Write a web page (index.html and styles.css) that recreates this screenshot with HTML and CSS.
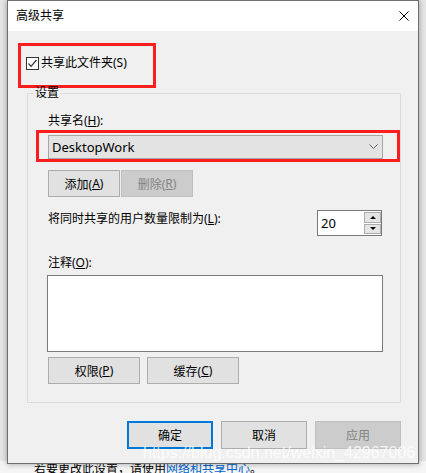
FILE: index.html
```html
<html>
<head>
    <title>高级共享</title>
    <link rel="stylesheet" href="styles.css">
</head>
<body>
<div class="desktop">
    <div class="dialog">
        <div class="title-bar">
            <span class="title-text">高级共享</span>
            <span class="close-btn">
                <svg width="10" height="10" viewBox="0 0 10 10"><path d="M0.5 0.5 L9.5 9.5 M9.5 0.5 L0.5 9.5" stroke="#000" stroke-width="1" fill="none"/></svg>
            </span>
        </div>
        <div class="dialog-body">
            <div class="mark mark-share">
                <div class="check-row">
                    <span class="check-box">
                        <svg width="13" height="13" viewBox="0 0 13 13"><rect x="0.5" y="0.5" width="12" height="12" fill="#fff" stroke="#333"/><polyline points="2.5,6.5 5,9.3 10.5,3" fill="none" stroke="#333" stroke-width="1.2"/></svg>
                    </span>
                    <span>共享此文件夹(S)</span>
                </div>
            </div>
            <fieldset class="group">
                <legend class="group-title">设置</legend>
                <div class="field-label">共享名(<u>H</u>):</div>
                <div class="mark mark-combo">
                    <div class="combo">
                        <span class="combo-text">DesktopWork</span>
                        <svg width="9" height="6" viewBox="0 0 9 6"><polyline points="0.5,0.5 4.5,4.5 8.5,0.5" fill="none" stroke="#606060" stroke-width="1"/></svg>
                    </div>
                </div>
                <div class="btn-row btn-row-tight">
                    <span class="btn btn-small">添加(<u>A</u>)</span>
                    <span class="btn btn-small disabled">删除(<u>R</u>)</span>
                </div>
                <div class="limit-row">
                    <span class="limit-label">将同时共享的用户数量限制为(<u>L</u>):</span>
                    <div class="spin">
                        <span class="spin-value">20</span>
                        <div class="spin-btns">
                            <span class="spin-btn"><span class="tri-up"></span></span>
                            <span class="spin-btn"><span class="tri-down"></span></span>
                        </div>
                    </div>
                </div>
                <div class="field-label field-label-comment">注释(<u>O</u>):</div>
                <div class="comment-box"></div>
                <div class="btn-row btn-row-wide">
                    <span class="btn btn-wide">权限(<u>P</u>)</span>
                    <span class="btn btn-wide">缓存(<u>C</u>)</span>
                </div>
            </fieldset>
            <div class="footer">
                <span class="btn btn-main default">确定</span>
                <span class="btn btn-main">取消</span>
                <span class="btn btn-main disabled">应用</span>
            </div>
        </div>
    </div>
    <div class="behind-text">若要更改此设置，请使用<span class="link">网络和共享中心</span>。</div>
    <div class="watermark">https://blog.csdn.net/weixin_42967006</div>
</div>
</body>
</html>
```

FILE: styles.css
```css
body {
    margin: 0;
    width: 426px;
    height: 473px;
    overflow: hidden;
    background: #f0f0f0;
    font-family: "Noto Sans", "Noto Sans CJK SC", sans-serif;
    font-size: 12px;
    color: #000;
}

.desktop {
    position: relative;
    height: 473px;
    background: #e6e6e6;
}

.dialog {
    position: relative;
    z-index: 1;
    width: 412px;
    height: 464px;
    margin-left: 7px;
    box-sizing: border-box;
    border: 1px solid #6e6e6e;
    background: #f0f0f0;
    box-shadow: 0 0 6px rgba(0,0,0, .35);
    display: flex;
    flex-direction: column;
}

.title-bar {
    height: 30px;
    flex-shrink: 0;
    background: #fff;
    display: flex;
    align-items: center;
    justify-content: space-between;
    padding: 0 9px 0 8px;
}

.title-text {
    line-height: 16px;
}

.close-btn svg {
    display: block;
}

.dialog-body {
    flex: 1;
    padding-top: 12px;
}

.mark {
    box-sizing: border-box;
    border: 3px solid #fa1e1e;
}

.mark-share {
    width: 138px;
    height: 45px;
    margin-left: 10px;
    padding: 9px 0 0 5px;
}

.check-row {
    display: flex;
    align-items: center;
    gap: 2px;
    line-height: 16px;
}

.check-box svg {
    display: block;
}

.group {
    width: 374px;
    box-sizing: border-box;
    min-width: 0;
    margin: -3px 0 0 19px;
    padding: 12px 16px 18px 20px;
    border: 1px solid #dcdcdc;
}

.group-title {
    margin-left: -14px;
    padding: 0 1px;
    line-height: 16px;
}

.field-label {
    line-height: 16px;
}

.field-label-comment {
    margin-top: 19px;
}

.mark-combo {
    width: 364px;
    margin: 1px 0 0 -12px;
    padding: 2px 0 0 9px;
}

.combo {
    width: 335px;
    height: 24px;
    box-sizing: border-box;
    border: 1px solid #a6a6a6;
    background: #e3e3e3;
    display: flex;
    align-items: center;
    justify-content: space-between;
    padding: 0 4px 0 3px;
    font-size: 13px;
}

.combo svg {
    display: block;
}

.btn {
    display: inline-flex;
    align-items: center;
    justify-content: center;
    box-sizing: border-box;
    border: 1px solid #adadad;
    background: #e1e1e1;
}

.btn.disabled {
    background: #cccccc;
    border-color: #bfbfbf;
    color: #838383;
}

.btn.default {
    border: 2px solid #0078d7;
}

.btn-row {
    display: flex;
}

.btn-row-tight {
    margin-top: 8px;
    gap: 1px;
}

.btn-row-wide {
    margin-top: 5px;
    gap: 7px;
}

.btn-small {
    width: 72px;
    height: 27px;
}

.btn-wide {
    width: 92px;
    height: 27px;
}

.limit-row {
    margin-top: 13px;
    display: flex;
    justify-content: space-between;
    align-items: flex-start;
    padding-right: 2px;
}

.limit-label {
    margin-top: 1px;
    line-height: 16px;
}

.spin {
    width: 65px;
    height: 26px;
    box-sizing: border-box;
    border: 1px solid #7a7a7a;
    background: #fff;
    display: flex;
    justify-content: space-between;
}

.spin-value {
    padding-left: 3px;
    font-size: 13px;
    line-height: 24px;
}

.spin-btns {
    width: 17px;
    display: flex;
    flex-direction: column;
    gap: 1px;
    padding: 1px 0;
}

.spin-btn {
    flex: 1;
    box-sizing: border-box;
    border: 1px solid #adadad;
    background: #e5e5e5;
    display: flex;
    align-items: center;
    justify-content: center;
}

.tri-up {
    border-left: 3px solid transparent;
    border-right: 3px solid transparent;
    border-bottom: 3px solid #000;
}

.tri-down {
    border-left: 3px solid transparent;
    border-right: 3px solid transparent;
    border-top: 3px solid #000;
}

.comment-box {
    width: 336px;
    height: 77px;
    margin: 4px 0 0 -1px;
    box-sizing: border-box;
    border: 1px solid #7a7a7a;
    background: #fff;
}

.footer {
    margin-top: 18px;
    padding-right: 17px;
    display: flex;
    justify-content: flex-end;
    gap: 8px;
}

.btn-main {
    width: 86px;
    height: 28px;
}

.behind-text {
    margin-top: -3px;
    padding-left: 34px;
    line-height: 16px;
    background: #f5f5f5;
    height: 20px;
}

.link {
    color: #0066cc;
}

.watermark {
    position: absolute;
    left: 143px;
    top: 443px;
    z-index: 2;
    font-family: "Liberation Sans", sans-serif;
    font-size: 16px;
    line-height: 20px;
    color: rgba(255,255,255, .8);
    white-space: nowrap;
}
```
